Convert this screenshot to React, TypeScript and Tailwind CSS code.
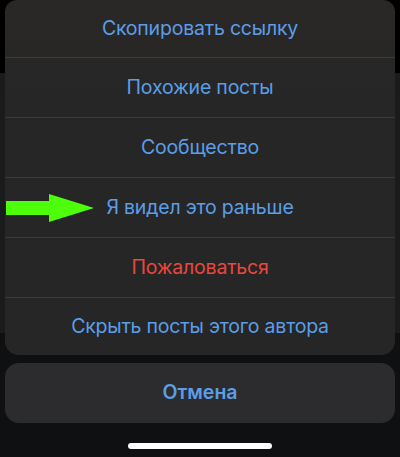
import { Fragment } from "react";

type Action = { label: string; danger?: boolean; arrow?: boolean };

const ACTIONS: Action[] = [
  { label: "Скопировать ссылку" },
  { label: "Похожие посты" },
  { label: "Сообщество" },
  { label: "Я видел это раньше", arrow: true },
  { label: "Пожаловаться", danger: true },
  { label: "Скрыть посты этого автора" },
];

function GreenArrow() {
  return (
    <svg width="88" height="28" viewBox="0 0 88 28" className="absolute left-[1px] top-1/2 -translate-y-1/2">
      <polygon points="0,7 43,7 43,0 88,14 43,28 43,21 0,21" fill="#4dff0a" />
    </svg>
  );
}

export default function App() {
  return (
    <div
      className="relative w-[400px] h-[457px] overflow-hidden bg-[#0f1012]"
      style={{ fontFamily: "Inter, 'Noto Sans', sans-serif" }}
    >
      {/* dimmed screen behind the sheet */}
      <div className="flex flex-col h-full">
        <div className="h-[73px] bg-black" />
        <div className="h-[260px] bg-[#1a1b1c]" />
        <div className="flex-1 bg-[#0f1012]" />
      </div>

      {/* action sheet */}
      <div className="absolute inset-0 flex flex-col px-[5px]">
        <div className="rounded-[14px] rounded-t-[12px] overflow-hidden bg-[linear-gradient(180deg,#2a2826_0%,#262626_30%,#262626_100%)]">
          {ACTIONS.map((a, i) => (
            <Fragment key={a.label}>
              {i > 0 && <div className="h-px bg-[#3a3a3a]" />}
              <div
                className={`relative flex items-center justify-center ${
                  i === 0 || i === ACTIONS.length - 1 ? "h-[57px]" : "h-[59px]"
                } text-[19.5px] tracking-[-0.2px] ${a.danger ? "text-[#e9483d]" : "text-[#5b9ee8]"}`}
              >
                {a.arrow && <GreenArrow />}
                {a.label}
              </div>
            </Fragment>
          ))}
        </div>

        <div className="mt-[8px] h-[60px] rounded-[14px] bg-[#2c2c2e] flex items-center justify-center text-[19.5px] font-semibold text-[#5b9ee8]">
          Отмена
        </div>

        <div className="flex justify-center mt-[20px]">
          <div className="w-[144px] h-[6px] rounded-full bg-white" />
        </div>
      </div>
    </div>
  );
}
